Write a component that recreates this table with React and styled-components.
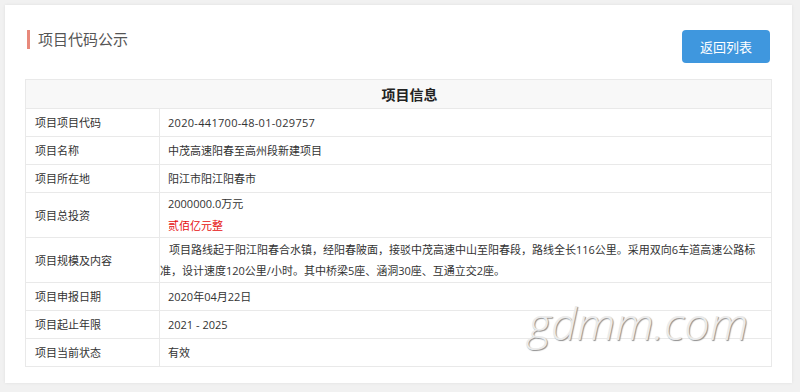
import React from "react";
import styled, { createGlobalStyle } from "styled-components";

const Global = createGlobalStyle`
  html, body { margin: 0; padding: 0; background: #f1f1f1; }
  body { font-family: "Open Sans", "Noto Sans CJK SC", sans-serif; color: #333; }
`;

const Card = styled.div`
  position: relative;
  margin: 5px 8px 9px 5px;
  background: #fff;
  box-shadow: 0 0 3px rgba(0, 0, 0, 0.08);
  padding: 25px 20px 16px 20px;
`;

const Header = styled.div`
  display: flex;
  justify-content: space-between;
  align-items: flex-start;
`;

const Title = styled.h2`
  display: flex;
  align-items: center;
  gap: 8px;
  margin: 0 0 0 2px;
  font-size: 15px;
  line-height: 19px;
  font-weight: normal;
  color: #555;
  &::before {
    content: "";
    width: 3px;
    height: 19px;
    background: #e8897b;
  }
`;

const BackButton = styled.button`
  width: 88px;
  height: 33px;
  margin-right: 2px;
  border: none;
  border-radius: 4px;
  background: #3f97de;
  color: #fff;
  font-family: "Noto Sans CJK SC", sans-serif;
  font-size: 13px;
  cursor: pointer;
`;

const Table = styled.table`
  width: 100%;
  margin-top: 16px;
  border-collapse: collapse;
  table-layout: fixed;
  font-size: 11px;
`;

const HeadCell = styled.th`
  background: #f8f8f8;
  border: 1px solid #e9e9e9;
  padding: 4px 0 4px 22px;
  line-height: 20px;
  font-size: 14px;
  font-weight: bold;
  color: #222;
  font-family: "Noto Sans CJK SC", sans-serif;
`;

const Label = styled.td`
  width: 134px;
  border: 1px solid #e9e9e9;
  padding: 5px 8px 4px 9px;
  line-height: 18px;
  vertical-align: middle;
  color: #333;
`;

const Value = styled.td`
  border: 1px solid #e9e9e9;
  padding: ${(p) => (p.$flush ? "1px 10px 1px 0" : p.$stack ? "0 8px" : "5px 8px 4px 8px")};
  line-height: ${(p) => (p.$flush ? "21px" : "18px")};
  text-indent: ${(p) => (p.$flush ? "9px" : "0")};
  letter-spacing: ${(p) => (p.$code ? "0.3px" : "0")};
  vertical-align: middle;
  color: #333;
`;

const Line = styled.div`
  line-height: 22px;
  color: ${(p) => (p.$red ? "#e60f0f" : "#333")};
`;

const Watermark = styled.div`
  position: absolute;
  left: 523px;
  top: 295px;
  font-family: "Open Sans", sans-serif;
  font-style: italic;
  font-weight: 300;
  font-size: 45px;
  line-height: 45px;
  color: #ebebeb;
  text-shadow: 1px 1px 1px #8f8f8f;
  pointer-events: none;
  white-space: nowrap;
`;

const rows = [
  ["项目项目代码", "2020-441700-48-01-029757", true],
  ["项目名称", "中茂高速阳春至高州段新建项目"],
  ["项目所在地", "阳江市阳江阳春市"],
];

const rowsAfter = [
  ["项目申报日期", "2020年04月22日"],
  ["项目起止年限", "2021 - 2025"],
  ["项目当前状态", "有效"],
];

export default function App() {
  return (
    <>
      <Global />
      <Card>
        <Header>
          <Title>项目代码公示</Title>
          <BackButton>返回列表</BackButton>
        </Header>
        <Table>
          <colgroup>
            <col style={{ width: 134 }} />
            <col />
          </colgroup>
          <thead>
            <tr>
              <HeadCell colSpan={2}>项目信息</HeadCell>
            </tr>
          </thead>
          <tbody>
            {rows.map(([k, v, code]) => (
              <tr key={k}>
                <Label>{k}</Label>
                <Value $code={code}>{v}</Value>
              </tr>
            ))}
            <tr>
              <Label>项目总投资</Label>
              <Value $stack>
                <Line>2000000.0万元</Line>
                <Line $red>贰佰亿元整</Line>
              </Value>
            </tr>
            <tr>
              <Label>项目规模及内容</Label>
              <Value $flush>
                项目路线起于阳江阳春合水镇，经阳春陂面，接驳中茂高速中山至阳春段，路线全长116公里。采用双向6车道高速公路标
                <br />
                准，设计速度120公里/小时。其中桥梁5座、涵洞30座、互通立交2座。
              </Value>
            </tr>
            {rowsAfter.map(([k, v]) => (
              <tr key={k}>
                <Label>{k}</Label>
                <Value>{v}</Value>
              </tr>
            ))}
          </tbody>
        </Table>
        <Watermark>gdmm.com</Watermark>
      </Card>
    </>
  );
}
